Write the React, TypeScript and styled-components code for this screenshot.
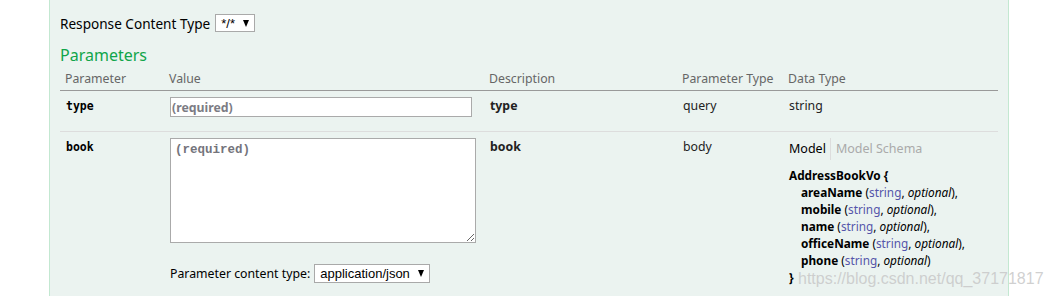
import React from "react";
import styled, { createGlobalStyle } from "styled-components";

const Global = createGlobalStyle`
  html, body { margin: 0; padding: 0; background: #ffffff; }
  body { font-family: "Noto Sans", "Open Sans", sans-serif; color: #222; }
`;

const COLS = "104px 320px 193px 106px 215px";

const Page = styled.div`
  position: relative;
  width: 1052px;
  height: 296px;
  overflow: hidden;
  padding-left: 49px;
  box-sizing: border-box;
`;

const Panel = styled.div`
  width: 960px;
  min-height: 296px;
  box-sizing: border-box;
  background: #ebf3f0;
  border-left: 1px solid #c3e8d1;
  border-right: 1px solid #c3e8d1;
  padding: 14px 10px 20px;
`;

const ResponseRow = styled.div`
  display: flex;
  align-items: center;
  gap: 5px;
  height: 18px;
`;

const Label = styled.span<{ $size?: number }>`
  font-size: ${(p) => p.$size ?? 13.6}px;
  color: #000;
  white-space: nowrap;
`;

const SelectBox = styled.div<{ $h: number }>`
  display: inline-flex;
  align-items: center;
  gap: 8px;
  box-sizing: border-box;
  height: ${(p) => p.$h}px;
  padding: 0 5px 0 5px;
  background: #fff;
  border: 1px solid #a9a9a9;
  font-family: "Liberation Sans", Arial, sans-serif;
  font-size: 13px;
  color: #000;
`;

const Arrow = styled.span`
  width: 0;
  height: 0;
  border-left: 3.5px solid transparent;
  border-right: 3.5px solid transparent;
  border-top: 7px solid #000;
`;

const Heading = styled.h4`
  margin: 13px 0 0;
  font-size: 16px;
  line-height: 20px;
  font-weight: normal;
  color: #10a54a;
`;

const HeadRow = styled.div`
  display: grid;
  grid-template-columns: ${COLS};
  border-bottom: 1px solid #999;
`;

const Th = styled.div`
  padding: 6px 5px 3px;
  font-size: 12.3px;
  line-height: 16px;
  color: #666;
  white-space: nowrap;
`;

const BodyRow = styled.div<{ $last?: boolean }>`
  display: grid;
  grid-template-columns: ${COLS};
  min-height: 40px;
  border-bottom: ${(p) => (p.$last ? "none" : "1px solid #ddd")};
`;

const Td = styled.div`
  padding: 6px;
  font-size: 12.3px;
  line-height: 17px;
  color: #222;
  min-width: 0;
`;

const NameTd = styled(Td)`
  padding-top: 7px;
  font-family: "DejaVu Sans Mono", Consolas, monospace;
  font-size: 11.5px;
  font-weight: bold;
  color: #000;
`;

const Strong = styled.strong`
  font-weight: bold;
  color: #222;
`;

const TextInput = styled.input`
  display: block;
  box-sizing: border-box;
  width: 302px;
  height: 20px;
  margin: 0;
  padding: 0 1px;
  border: 1px solid #aaa;
  background: #fff;
  font-family: "Noto Sans", sans-serif;
  font-size: 12.3px;
  outline: none;
  &::placeholder {
    color: #7c7c84;
    font-weight: 700;
  }
`;

const TextArea = styled.textarea`
  display: block;
  box-sizing: border-box;
  width: 306px;
  height: 105px;
  margin: 0;
  padding: 4px;
  border: 1px solid #aaa;
  background: #fff;
  font-family: "Liberation Mono", "Courier New", monospace;
  font-size: 12.5px;
  font-weight: 700;
  outline: none;
  &::placeholder {
    font-family: "Liberation Mono", "Courier New", monospace;
    color: #74747c;
    font-weight: 700;
  }
`;

const ContentTypeRow = styled.div`
  display: flex;
  align-items: center;
  gap: 4px;
  margin-top: 21px;
  height: 19px;
`;

const SigNav = styled.div`
  display: flex;
  height: 22px;
  align-items: center;
  font-size: 12.5px;
  line-height: 22px;
`;

const NavItem = styled.span<{ $selected?: boolean }>`
  color: ${(p) => (p.$selected ? "#000" : "#aaa")};
  padding: ${(p) => (p.$selected ? "0 4px 0 0" : "0 0 0 5px")};
  border-right: ${(p) => (p.$selected ? "1px solid #ddd" : "none")};
`;

const Signature = styled.div`
  margin-top: 7px;
  font-size: 11.8px;
  line-height: 17px;
  color: #000;
`;

const SigLine = styled.div<{ $indent?: boolean }>`
  padding-left: ${(p) => (p.$indent ? 12 : 0)}px;
  white-space: nowrap;
`;

const PropName = styled.span`
  font-weight: bold;
`;

const PropType = styled.span`
  color: #5555aa;
`;

const PropOpt = styled.span`
  font-style: italic;
`;

const Watermark = styled.div`
  position: absolute;
  left: 798px;
  top: 270px;
  font-family: "Liberation Sans", Arial, sans-serif;
  font-size: 16px;
  line-height: 18px;
  color: rgba(200, 200, 200, 0.85);
  white-space: nowrap;
  pointer-events: none;
`;

const props = ["areaName", "mobile", "name", "officeName", "phone"];

export default function App() {
  return (
    <>
      <Global />
      <Page>
        <Panel>
          <ResponseRow>
            <Label>Response Content Type</Label>
            <SelectBox $h={18}>
              <span>*/*</span>
              <Arrow />
            </SelectBox>
          </ResponseRow>
          <Heading>Parameters</Heading>
          <HeadRow>
            <Th>Parameter</Th>
            <Th>Value</Th>
            <Th>Description</Th>
            <Th>Parameter Type</Th>
            <Th>Data Type</Th>
          </HeadRow>
          <BodyRow>
            <NameTd>type</NameTd>
            <Td>
              <TextInput placeholder="(required)" />
            </Td>
            <Td>
              <Strong>type</Strong>
            </Td>
            <Td>query</Td>
            <Td>string</Td>
          </BodyRow>
          <BodyRow $last>
            <NameTd>book</NameTd>
            <Td>
              <TextArea placeholder="(required)" />
              <ContentTypeRow>
                <Label $size={12.3}>Parameter content type:</Label>
                <SelectBox $h={19}>
                  <span>application/json</span>
                  <Arrow />
                </SelectBox>
              </ContentTypeRow>
            </Td>
            <Td>
              <Strong>book</Strong>
            </Td>
            <Td>body</Td>
            <Td>
              <SigNav>
                <NavItem $selected>Model</NavItem>
                <NavItem>Model Schema</NavItem>
              </SigNav>
              <Signature>
                <SigLine>
                  <PropName>AddressBookVo {"{"}</PropName>
                </SigLine>
                {props.map((p, i) => (
                  <SigLine $indent key={p}>
                    <PropName>{p}</PropName> (<PropType>string</PropType>,{" "}
                    <PropOpt>optional</PropOpt>){i < props.length - 1 ? "," : ""}
                  </SigLine>
                ))}
                <SigLine>
                  <PropName>{"}"}</PropName>
                </SigLine>
              </Signature>
            </Td>
          </BodyRow>
        </Panel>
        <Watermark>https://blog.csdn.net/qq_37171817</Watermark>
      </Page>
    </>
  );
}
